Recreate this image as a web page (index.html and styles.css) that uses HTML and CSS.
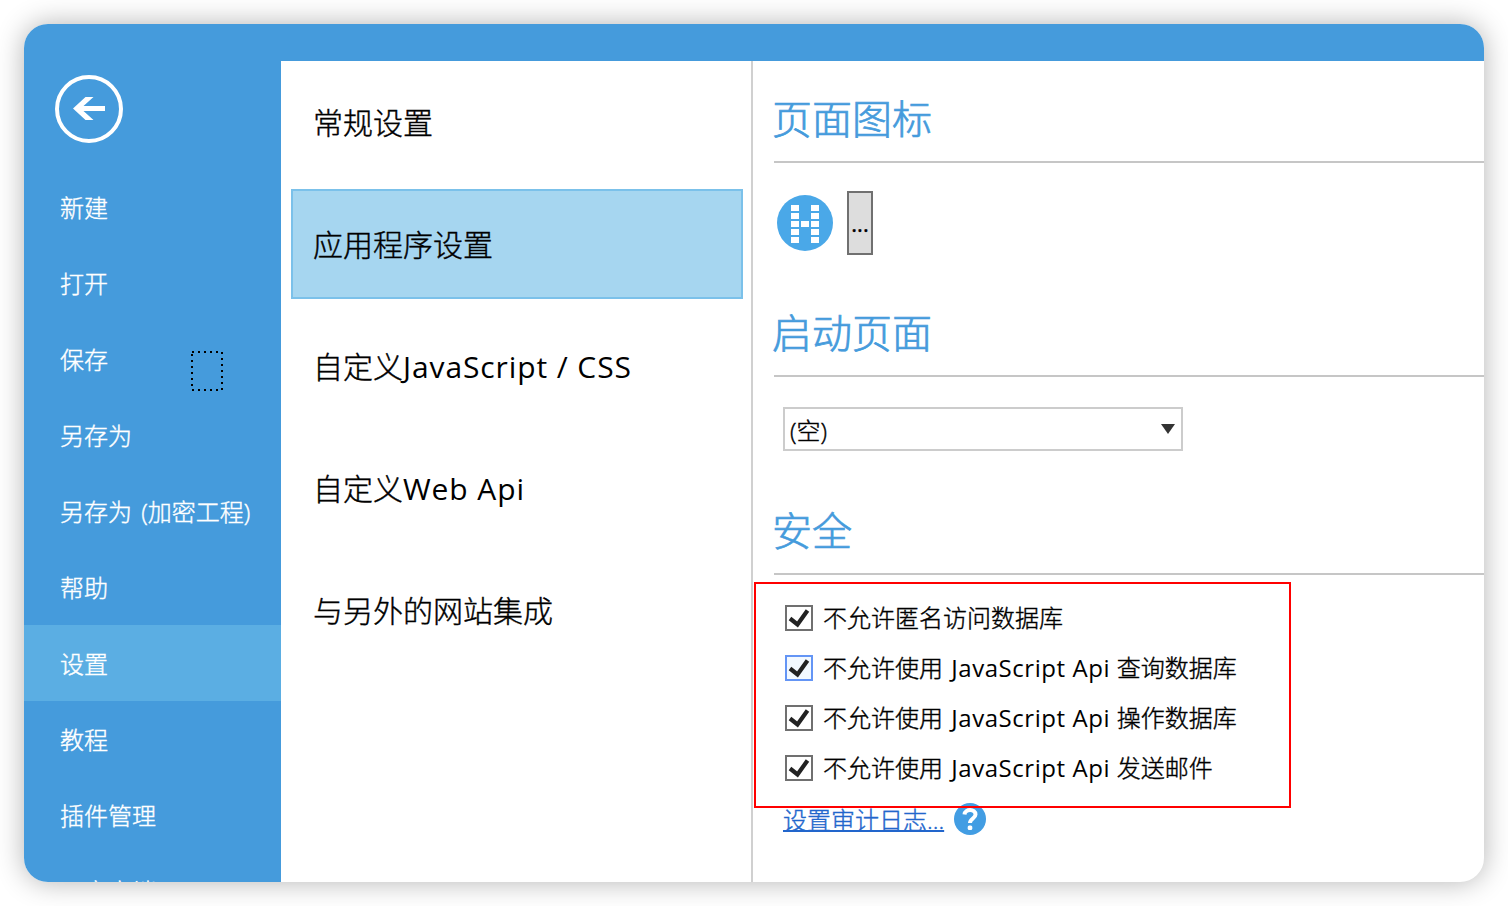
FILE: index.html
```html
<!DOCTYPE html>
<html lang="zh-CN">
<head>
<meta charset="utf-8">
<title>设置</title>
<link rel="stylesheet" href="styles.css">
</head>
<body>
<div class="window">
  <div class="titlebar"></div>
  <div class="body">
    <nav class="sidebar">
      <button class="back" aria-label="返回">
        <svg width="68" height="68" viewBox="0 0 68 68"><circle cx="34" cy="34" r="32" fill="none" stroke="#fff" stroke-width="4"/><path d="M18 33.500 30.500 22H38.500L28.500 31H50V36H28.500L38.500 45H30.500Z" fill="#fff"/></svg>
      </button>
      <a class="nav-item">新建</a>
      <a class="nav-item">打开</a>
      <a class="nav-item">保存</a>
      <a class="nav-item">另存为</a>
      <a class="nav-item">另存为 (加密工程)</a>
      <a class="nav-item">帮助</a>
      <a class="nav-item active">设置</a>
      <a class="nav-item">教程</a>
      <a class="nav-item">插件管理</a>
      <a class="nav-item">云客户端</a>
      <svg class="focus-box" width="32" height="40" viewBox="0 0 32 40"><path d="M2 0h2v2H2zM8 0h2v2H8zM14 0h2v2h-2zM20 0h2v2h-2zM26 0h2v2h-2zM2 38h2v2H2zM8 38h2v2H8zM14 38h2v2h-2zM20 38h2v2h-2zM26 38h2v2h-2zM1 3h2v2H1zM1 9h2v2H1zM1 15h2v2H1zM1 21h2v2H1zM1 27h2v2H1zM1 33h2v2H1zM31 1h2v2h-2zM31 7h2v2h-2zM31 13h2v2h-2zM31 19h2v2h-2zM31 25h2v2h-2zM31 31h2v2h-2zM31 37h2v2h-2z"/></svg>
    </nav>
    <div class="categories">
      <a class="category">常规设置</a>
      <a class="category selected">应用程序设置</a>
      <a class="category">自定义<span class="latin">JavaScript / CSS</span></a>
      <a class="category">自定义<span class="latin">Web Api</span></a>
      <a class="category">与另外的网站集成</a>
    </div>
    <main class="content">
      <h2 class="heading"><span>页面图标</span></h2>
      <div class="icon-row">
        <svg width="56" height="56" viewBox="0 0 56 56"><circle cx="28" cy="28" r="28" fill="#4aa8e8"/><path fill="#fff" d="M14 10h8v6h-8zM14 18h8v6h-8zM14 26h8v6h-8zM14 34h8v6h-8zM14 42h8v6h-8zM24 26h8v6h-8zM34 10h8v6h-8zM34 18h8v6h-8zM34 26h8v6h-8zM34 34h8v6h-8zM34 42h8v6h-8z"/></svg>
        <button class="browse">...</button>
      </div>
      <h2 class="heading"><span>启动页面</span></h2>
      <div class="select"><span>(空)</span><svg width="14" height="10" viewBox="0 0 14 10"><path d="M0 0H14L7 10Z" fill="#333"/></svg></div>
      <h2 class="heading"><span>安全</span></h2>
      <div class="checks">
        <label class="check"><span class="box"><svg width="24" height="22" viewBox="0 0 24 22"><path d="M3 11.500 10.500 17.500 20.500 3.500" class="tick"/></svg></span><span class="caption">不允许匿名访问数据库</span></label>
        <label class="check"><span class="box hot"><svg width="24" height="22" viewBox="0 0 24 22"><path d="M3 11.500 10.500 17.500 20.500 3.500" class="tick"/></svg></span><span class="caption">不允许使用<span class="api"> JavaScript Api </span>查询数据库</span></label>
        <label class="check"><span class="box"><svg width="24" height="22" viewBox="0 0 24 22"><path d="M3 11.500 10.500 17.500 20.500 3.500" class="tick"/></svg></span><span class="caption">不允许使用<span class="api"> JavaScript Api </span>操作数据库</span></label>
        <label class="check"><span class="box"><svg width="24" height="22" viewBox="0 0 24 22"><path d="M3 11.500 10.500 17.500 20.500 3.500" class="tick"/></svg></span><span class="caption">不允许使用<span class="api"> JavaScript Api </span>发送邮件</span></label>
      </div>
      <div class="audit">
        <a class="link">设置审计日志...</a>
        <svg width="32" height="32" viewBox="0 0 32 32"><circle cx="16" cy="16" r="16" fill="#429de3"/><path d="M10.500 11.500C11 5.500 21.500 5.500 21.500 11.500C21.500 15.500 16 15.500 16 20" fill="none" stroke="#fff" stroke-width="4"/><rect x="13.700" y="22.500" width="4.600" height="4.600" rx="1.500" fill="#fff"/></svg>
      </div>
      <div class="callout"></div>
    </main>
  </div>
</div>
</body>
</html>
```
FILE: styles.css
```css
* { box-sizing: border-box; }
body {
  margin: 0;
  height: 906px;
  padding: 24px;
  overflow: hidden;
  background: #fff;
  color: #000;
  font-family: "Open Sans", "Noto Sans CJK SC", sans-serif;
  font-weight: 300;
  -webkit-text-stroke: .4px currentColor;
}
.window {
  width: 1460px;
  height: 858px;
  border-radius: 24px;
  overflow: hidden;
  background: #fff;
  box-shadow: 0 0 28px rgba(0, 0, 0, .3);
}
.titlebar { height: 37px; background: #459bdc; }
.body { display: flex; height: 821px; }
.sidebar {
  position: relative;
  width: 257px;
  padding-top: 14px;
  background: #459bdc;
  color: #fff;
  font-size: 24px;
  word-spacing: 3px;
}
.back {
  display: block;
  margin: 0 0 26px 31px;
  padding: 0;
  width: 68px;
  height: 68px;
  border: 0;
  background: none;
}
.back svg { display: block; }
.nav-item {
  display: block;
  height: 76px;
  padding-left: 36px;
  line-height: 78px;
  white-space: nowrap;
}
.active { background: #5baee3; }
.focus-box { position: absolute; left: 166px; top: 290px; overflow: visible; }
.categories {
  width: 472px;
  padding: 6px 8px 0 10px;
  border-right: 2px solid #d0d0d0;
  font-size: 30px;
}
.category {
  display: block;
  height: 110px;
  margin-bottom: 12px;
  padding-left: 20px;
  border: 2px solid transparent;
  line-height: 108px;
  white-space: nowrap;
}
.selected { background: #a6d6f0; border-color: #7bc1ea; }
.latin, .api { font-weight: 400; -webkit-text-stroke: 0; }
.latin { letter-spacing: .9px; }
.api { margin-left: 1.500px; letter-spacing: .55px; }
.content { position: relative; flex: 1; padding-left: 21px; font-size: 24px; }
.heading {
  margin: 0;
  height: 102px;
  border-bottom: 2px solid #c6c6c6;
  color: #459bdc;
  font-size: 40px;
  font-weight: 300;
  line-height: 116px;
}
.heading span { margin-left: -2px; -webkit-text-stroke: .7px currentColor; }
.icon-row {
  display: flex;
  align-items: center;
  gap: 14px;
  height: 120px;
  padding-left: 3px;
}
.browse {
  width: 26px;
  height: 64px;
  padding: 0;
  border: 2px solid #707070;
  background: #ddd;
  font: 400 22px "Open Sans", sans-serif;
}
.icon-row + .heading { height: 94px; line-height: 100px; }
.select {
  display: flex;
  align-items: center;
  justify-content: space-between;
  width: 400px;
  height: 44px;
  margin: 30px 0 30px 9px;
  padding: 0 6px 0 5px;
  border: 2px solid #ccc;
}
.select + .heading { height: 94px; line-height: 100px; }
.checks { padding: 18px 0 0 11px; }
.check { display: flex; align-items: center; height: 50px; gap: 10px; white-space: nowrap; }
.caption { padding-bottom: 4px; }
.box { width: 28px; height: 26px; border: 2px solid #707070; background: #fff; }
.box svg { display: block; }
.hot { border-color: #6495f5; background: #f3f9ff; }
.tick { fill: none; stroke: #222; stroke-width: 4.200; }
.audit { display: flex; align-items: center; gap: 10px; padding: 8px 0 0 9px; }
.link { color: #2266cc; text-decoration: underline; text-decoration-thickness: 2px; }
.callout {
  position: absolute;
  left: 1px;
  top: 521px;
  width: 537px;
  height: 226px;
  border: 2px solid #f00;
}
```
